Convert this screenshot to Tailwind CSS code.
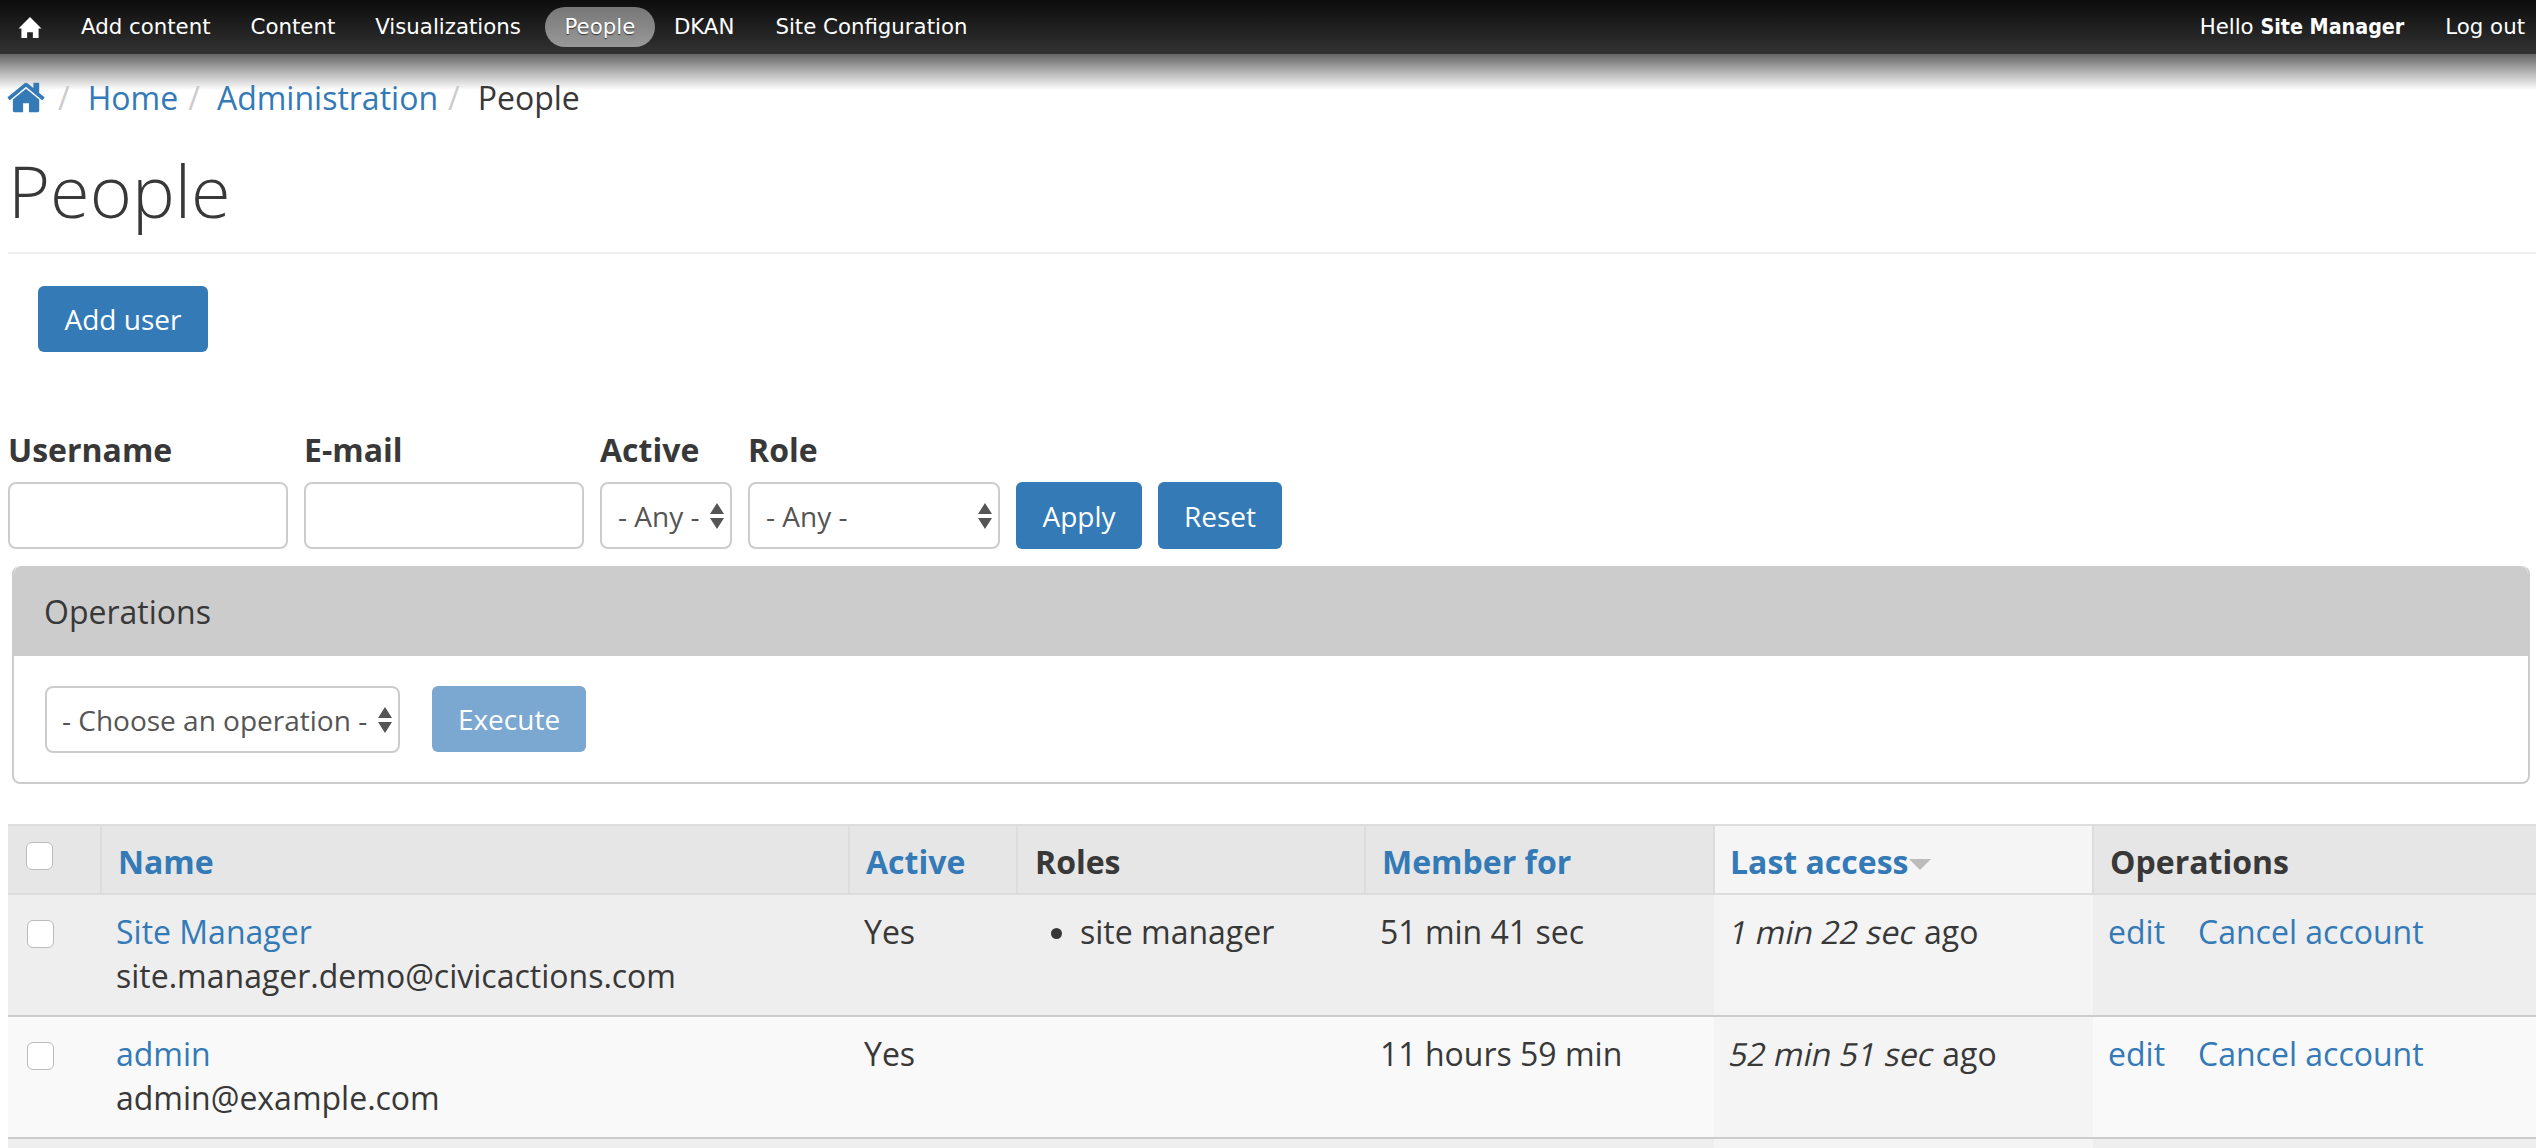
<!DOCTYPE html>
<html lang="en">
<head>
  <meta charset="UTF-8">
  <title>People</title>
  <script src="https://cdn.jsdelivr.net/npm/@tailwindcss/browser@4"></script>
</head>
<body class="h-[1148px] overflow-hidden bg-white font-['Open_Sans',sans-serif] text-[32px] leading-[44px] text-[#383838]">
  <!-- Admin menu -->
  <nav class="flex h-[54px] items-center justify-between bg-linear-to-b from-[#0d0d0d] to-[#333] pr-[11px] pl-[18px] font-['DejaVu_Sans',sans-serif] text-[21.3px] leading-none text-white">
    <ul class="flex items-center">
      <li class="mr-[39px]">
        <svg class="block h-[21px] w-[24px]" viewBox="0 0 24 22" fill="#fff"><path d="M12 0 L24 12 L21 12 L21 22 L15 22 L15 16 L9 16 L9 22 L3 22 L3 12 L0 12 Z"/></svg>
      </li>
      <li class="mr-[40px]">Add content</li>
      <li class="mr-[40px]">Content</li>
      <li class="mr-[24px]">Visualizations</li>
      <li class="mr-[19px] flex h-[40px] w-[110px] items-center justify-center rounded-[20px] bg-linear-to-b from-[#777] to-[#999] [text-shadow:0_1px_1px_#333]">People</li>
      <li class="mr-[41px]">DKAN</li>
      <li>Site Configuration</li>
    </ul>
    <ul class="flex items-center gap-[41px]">
      <li>Hello <strong class="font-['DejaVu_Sans_Condensed','DejaVu_Sans',sans-serif] text-[21.3px] font-bold">Site Manager</strong></li>
      <li>Log out</li>
    </ul>
  </nav>

  <!-- Breadcrumb -->
  <div class="h-[90px] bg-[linear-gradient(#666_0,#fff_36px)] pt-[22px] pl-[9px]">
    <ol class="flex items-center">
      <li><a href="#" class="-mt-[2px] -ml-[2px] block"><svg class="block h-[41px] w-[41px]" viewBox="0 0 1792 1792" fill="#337ab7"><path d="M1408 992v480q0 26-19 45t-45 19h-384v-384h-256v384h-384q-26 0-45-19t-19-45v-480q0-1 .5-3t.5-3l575-474 575 474q1 2 1 6zm223-69l-62 74q-8 9-21 11h-3q-13 0-21-7l-692-577-692 577q-12 8-24 7-13-2-21-11l-62-74q-8-10-7-23.500t11-21.500l719-599q32-26 76-26t76 26l244 204v-195q0-14 9-23t23-9h192q14 0 23 9t9 23v408l219 182q10 8 11 21.500t-7 23.500z"/></svg></a></li>
      <li class="mr-[18px] ml-[10px] text-[#ccc]">/</li>
      <li><a href="#" class="text-[#337ab7]">Home</a></li>
      <li class="mr-[17px] ml-[10px] text-[#ccc]">/</li>
      <li><a href="#" class="text-[#337ab7]">Administration</a></li>
      <li class="mr-[18px] ml-[10px] text-[#ccc]">/</li>
      <li>People</li>
    </ol>
  </div>

  <h1 class="ml-[8px] h-[110px] border-b-2 border-[#eee] pt-[6px] text-[72px] leading-[80px] font-light">People</h1>

  <div class="pt-[32px] pl-[38px]">
    <a href="#" class="inline-block h-[66px] w-[170px] rounded-[6px] bg-[#337ab7] text-center text-[28px] leading-[66px] text-white">Add user</a>
  </div>

  <!-- Filters -->
  <form class="mt-[76px] flex items-end gap-[16px] pl-[8px] text-[28px]">
    <div class="w-[280px]">
      <label class="mb-[10px] block text-[32px] font-bold">Username</label>
      <input type="text" class="block h-[67px] w-full rounded-[8px] border-2 border-[#ccc]">
    </div>
    <div class="w-[280px]">
      <label class="mb-[10px] block text-[32px] font-bold">E-mail</label>
      <input type="text" class="block h-[67px] w-full rounded-[8px] border-2 border-[#ccc]">
    </div>
    <div class="w-[132px]">
      <label class="mb-[10px] block text-[32px] font-bold">Active</label>
      <div class="flex h-[67px] items-center justify-between rounded-[8px] border-2 border-[#ccc] pr-[6px] pl-[16px] text-[#555]">
        <span>- Any -</span>
        <svg class="h-[26px] w-[14px]" viewBox="0 0 14 26" fill="#555"><path d="M7 0 L14 11 L0 11 Z M0 15 L14 15 L7 26 Z"/></svg>
      </div>
    </div>
    <div class="w-[252px]">
      <label class="mb-[10px] block text-[32px] font-bold">Role</label>
      <div class="flex h-[67px] items-center justify-between rounded-[8px] border-2 border-[#ccc] pr-[6px] pl-[16px] text-[#555]">
        <span>- Any -</span>
        <svg class="h-[26px] w-[14px]" viewBox="0 0 14 26" fill="#555"><path d="M7 0 L14 11 L0 11 Z M0 15 L14 15 L7 26 Z"/></svg>
      </div>
    </div>
    <button type="button" class="h-[67px] w-[126px] rounded-[6px] bg-[#337ab7] text-white">Apply</button>
    <button type="button" class="h-[67px] w-[124px] rounded-[6px] bg-[#337ab7] text-white">Reset</button>
  </form>

  <!-- Bulk operations -->
  <fieldset class="mt-[17px] mr-[6px] ml-[12px] h-[218px] rounded-[8px] border-2 border-t-0 border-[#ccc]">
    <div class="h-[90px] rounded-t-[8px] bg-[#ccc] pl-[30px] leading-[92px]">Operations</div>
    <div class="flex gap-[32px] pt-[30px] pl-[31px] text-[28px]">
      <div class="flex h-[67px] w-[355px] items-center justify-between rounded-[8px] border-2 border-[#ccc] pr-[6px] pl-[15px] text-[#555]">
        <span>- Choose an operation -</span>
        <svg class="h-[26px] w-[14px]" viewBox="0 0 14 26" fill="#555"><path d="M7 0 L14 11 L0 11 Z M0 15 L14 15 L7 26 Z"/></svg>
      </div>
      <button type="button" class="h-[66px] w-[154px] rounded-[6px] bg-[#337ab7]/65 text-white">Execute</button>
    </div>
  </fieldset>

  <!-- Users -->
  <table class="mt-[40px] ml-[8px] w-[2528px] table-fixed border-collapse">
    <colgroup>
      <col class="w-[93px]"><col class="w-[748px]"><col class="w-[168px]"><col class="w-[348px]"><col class="w-[349px]"><col class="w-[379px]"><col>
    </colgroup>
    <thead>
      <tr class="h-[69px] border-y-2 border-[#ddd] bg-[#e6e6e6] text-left font-bold">
        <th class="border-r-2 border-[#ddd] pb-[8px] pl-[18px]"><input type="checkbox" class="block h-[28px] w-[27px] appearance-none rounded-[6px] border border-[#bbb] bg-white"></th>
        <th class="border-r-2 border-[#ddd] pt-[4px] pl-[16px] text-[#337ab7]">Name</th>
        <th class="border-r-2 border-[#ddd] pt-[4px] pl-[16px] text-[#337ab7]">Active</th>
        <th class="border-r-2 border-[#ddd] pt-[4px] pl-[17px]">Roles</th>
        <th class="border-r-2 border-[#ddd] pt-[4px] pl-[16px] text-[#337ab7]">Member for</th>
        <th class="border-r-2 border-[#ddd] bg-[#f5f5f5] pt-[4px] pl-[15px] text-[#337ab7]">Last access<svg class="ml-[1px] inline-block h-[11px] w-[22px]" viewBox="0 0 22 11" fill="#bbb"><path d="M0 0 L22 0 L11 11 Z"/></svg></th>
        <th class="pt-[4px] pl-[16px]">Operations</th>
      </tr>
    </thead>
    <tbody>
      <tr class="h-[122px] border-b-2 border-[#ccc] bg-[#eee] align-top">
        <td class="pt-[25px] pl-[19px]"><input type="checkbox" class="block h-[28px] w-[27px] appearance-none rounded-[6px] border border-[#bbb] bg-white"></td>
        <td class="pt-[15px] pl-[15px]"><a href="#" class="text-[#337ab7]">Site Manager</a><br>site.manager.demo@civicactions.com</td>
        <td class="pt-[15px] pl-[15px]">Yes</td>
        <td class="pt-[15px] pl-[16px]">
          <ul class="list-disc pl-[47px]"><li>site manager</li></ul>
        </td>
        <td class="pt-[15px] pl-[15px]">51 min 41 sec</td>
        <td class="bg-[#f4f4f4] pt-[15px] pl-[16px]"><em class="inline-block -skew-x-12 not-italic">1 min 22 sec</em> ago</td>
        <td class="pt-[15px] pl-[15px] text-[#337ab7]"><a href="#">edit</a><a href="#" class="ml-[33px]">Cancel account</a></td>
      </tr>
      <tr class="h-[122px] border-b-2 border-[#ccc] bg-[#f9f9f9] align-top">
        <td class="pt-[25px] pl-[19px]"><input type="checkbox" class="block h-[28px] w-[27px] appearance-none rounded-[6px] border border-[#bbb] bg-white"></td>
        <td class="pt-[15px] pl-[15px]"><a href="#" class="text-[#337ab7]">admin</a><br>admin@example.com</td>
        <td class="pt-[15px] pl-[15px]">Yes</td>
        <td class="pt-[15px] pl-[16px]"></td>
        <td class="pt-[15px] pl-[15px]">11 hours 59 min</td>
        <td class="bg-[#f4f4f4] pt-[15px] pl-[16px]"><em class="inline-block -skew-x-12 not-italic">52 min 51 sec</em> ago</td>
        <td class="pt-[15px] pl-[15px] text-[#337ab7]"><a href="#">edit</a><a href="#" class="ml-[33px]">Cancel account</a></td>
      </tr>
      <tr class="h-[11px] bg-[#eee]">
        <td colspan="5"></td>
        <td class="bg-[#f4f4f4]"></td>
        <td></td>
      </tr>
    </tbody>
  </table>
</body>
</html>
